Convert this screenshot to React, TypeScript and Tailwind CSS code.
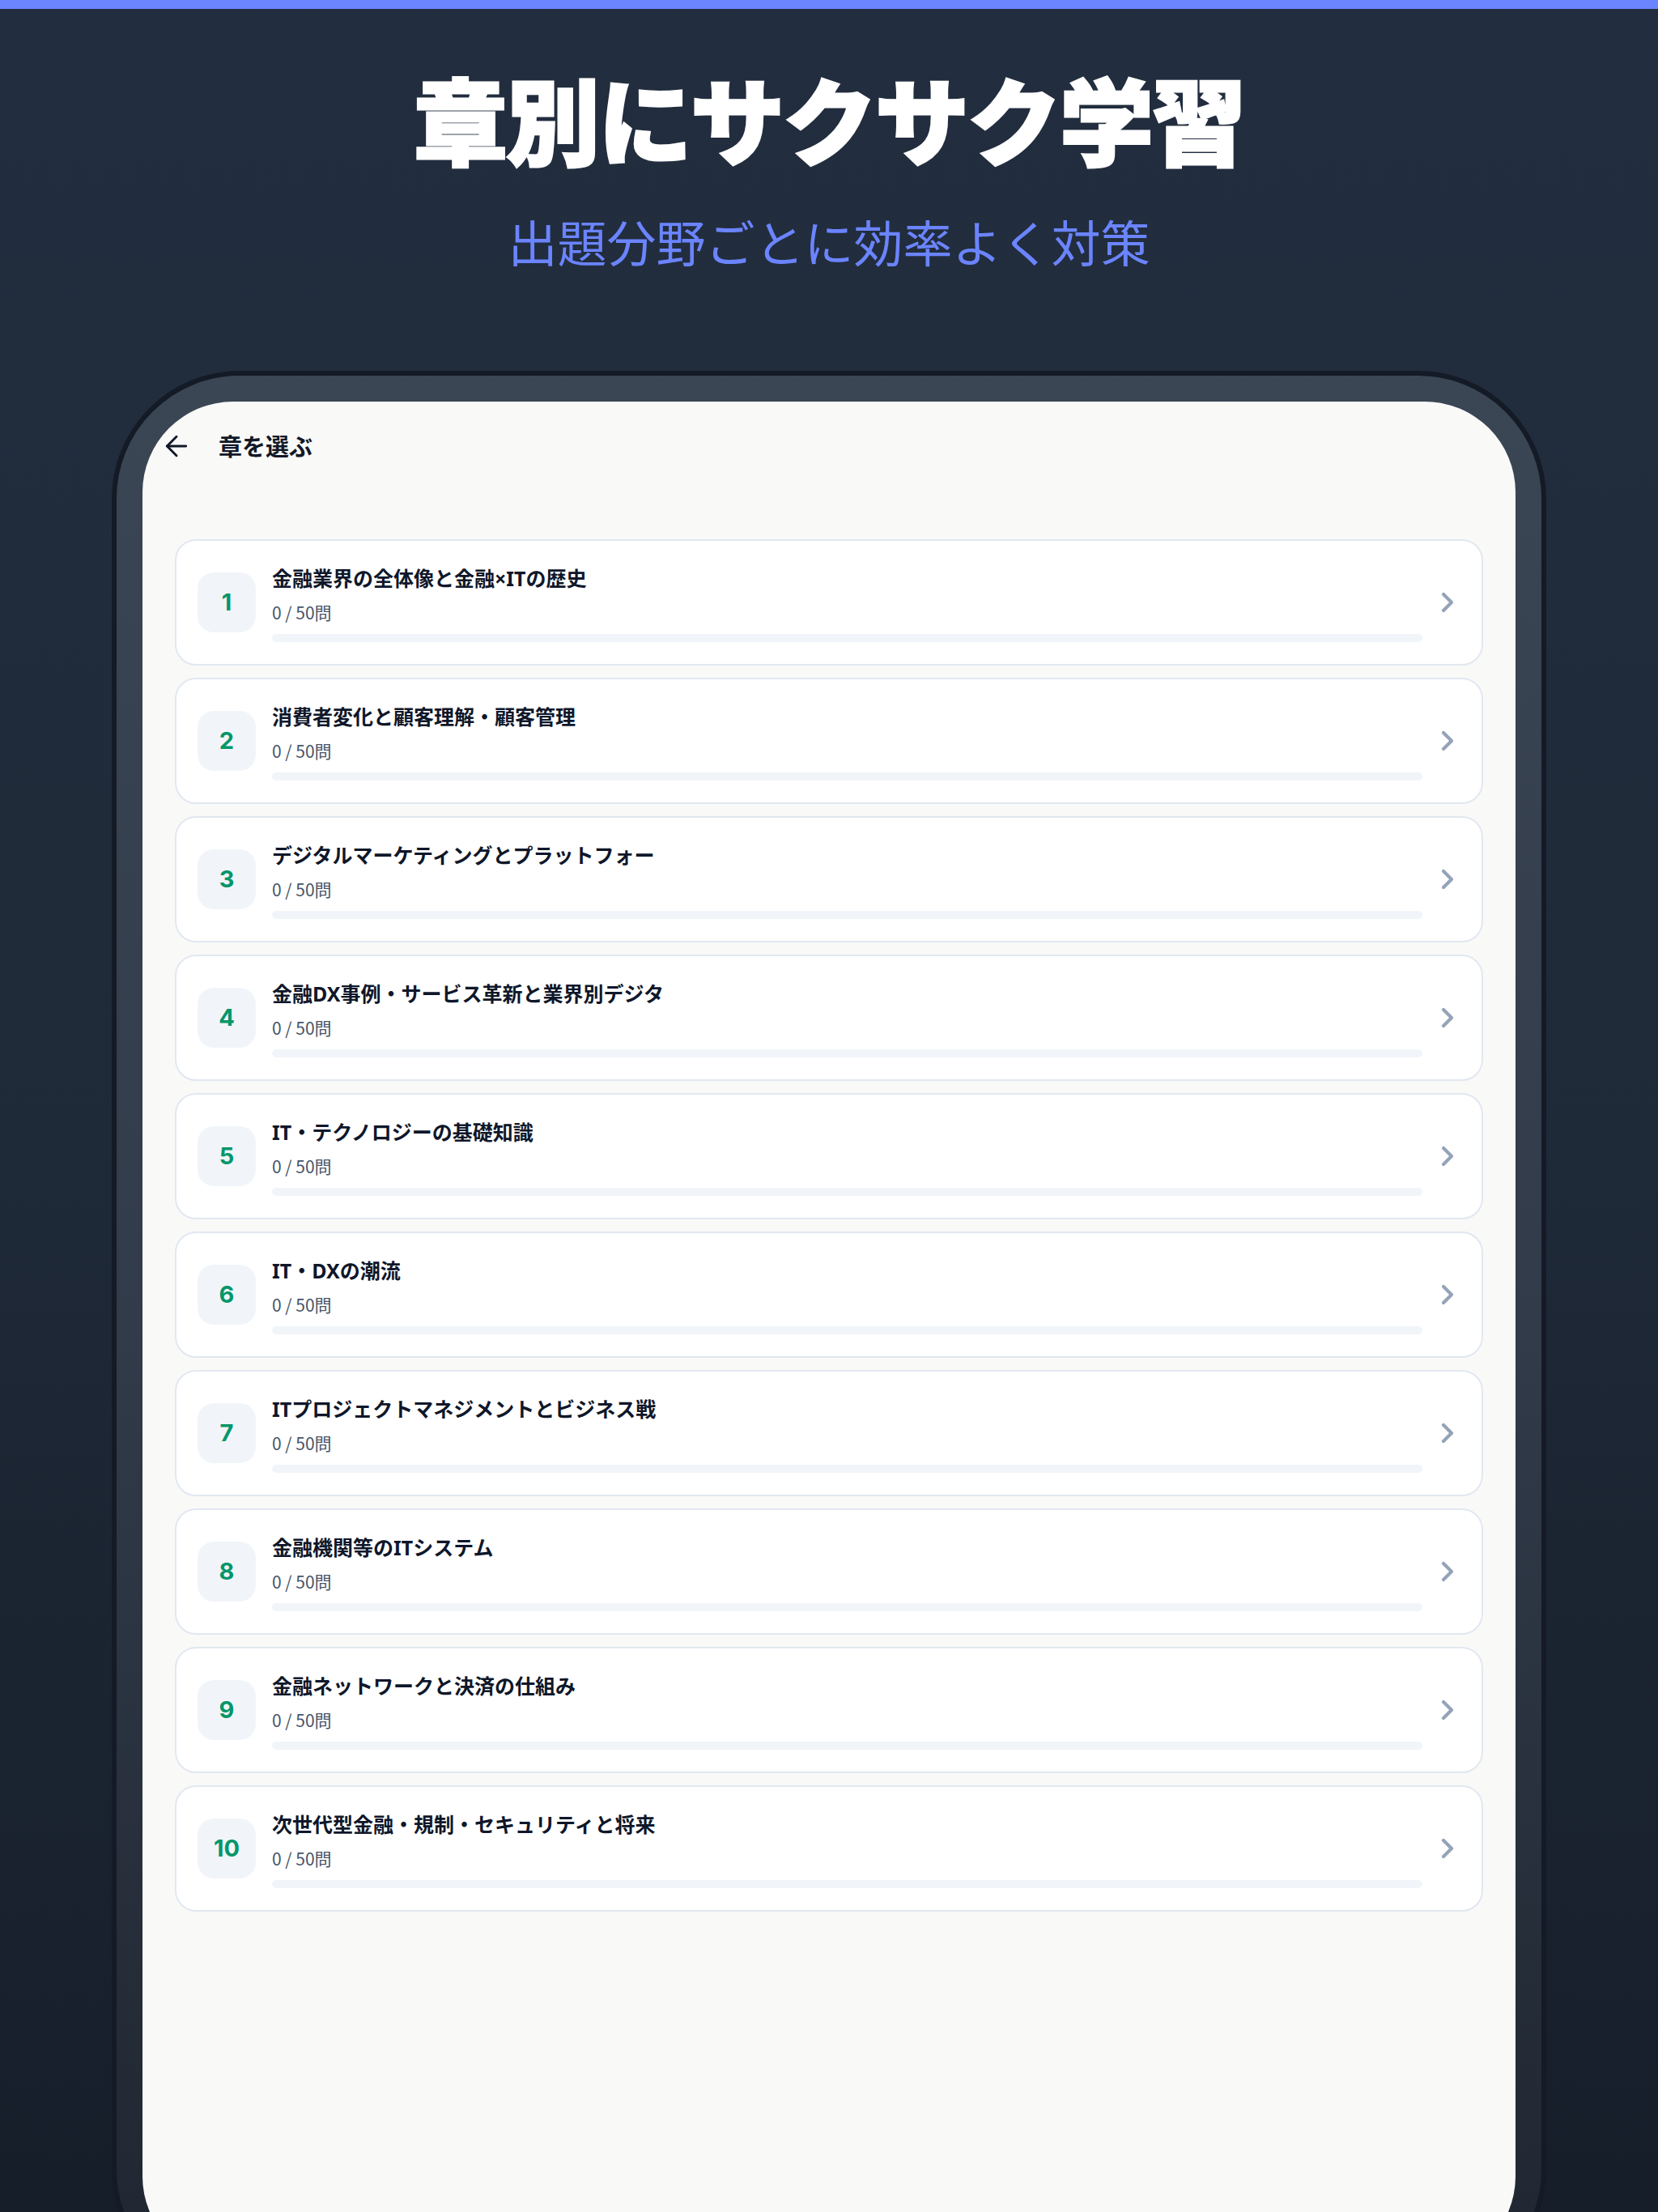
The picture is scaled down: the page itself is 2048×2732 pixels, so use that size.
import { ArrowLeft, ChevronRight } from "lucide-react";

const chapters = [
  "金融業界の全体像と金融×ITの歴史",
  "消費者変化と顧客理解・顧客管理",
  "デジタルマーケティングとプラットフォー",
  "金融DX事例・サービス革新と業界別デジタ",
  "IT・テクノロジーの基礎知識",
  "IT・DXの潮流",
  "ITプロジェクトマネジメントとビジネス戦",
  "金融機関等のITシステム",
  "金融ネットワークと決済の仕組み",
  "次世代型金融・規制・セキュリティと将来",
];

function ChapterCard(props: { index: number; title: string }) {
  return (
    <div className="flex h-[156px] items-center rounded-[26px] border-2 border-[#e2e8f0] bg-white pl-[26px] pr-[22px]">
      <div className="flex h-[74px] w-[72px] shrink-0 items-center justify-center rounded-[20px] bg-[#f1f5f9]">
        <span className="font-['Inter',sans-serif] text-[29px] font-bold text-[#059669]">
          {props.index}
        </span>
      </div>
      <div className="ml-5 flex flex-1 flex-col">
        <div className="font-['Noto_Sans','Noto_Sans_CJK_JP',sans-serif] text-[25px] leading-[36px] font-bold text-[#0f172a]">
          {props.title}
        </div>
        <div className="mt-[9px] text-[21px] leading-[30px] text-[#475569]">
          0 / 50問
        </div>
        <div className="mt-[12px] h-[10px] w-full rounded-full bg-[#f1f5f9]" />
      </div>
      <ChevronRight
        size={40}
        strokeWidth={2.5}
        className="ml-[11px] shrink-0 text-[#94a3b8]"
      />
    </div>
  );
}

export default function App() {
  return (
    <div className="flex h-[2732px] w-full flex-col items-center overflow-hidden bg-gradient-to-b from-[#222e3f] via-[#1f2a38] to-[#161e2a] font-['Noto_Sans_CJK_JP','Noto_Sans',sans-serif]">
      <div className="h-[11px] w-full shrink-0 bg-[#6b84ff]" />
      <h1 className="mt-[63px] text-[116px] leading-[140px] font-black tracking-[-2px] text-white [-webkit-text-stroke:3px_white]">
        章別にサクサク学習
      </h1>
      <p className="mt-[44px] text-[61px] leading-[80px] text-[#6b84ff]">
        出題分野ごとに効率よく対策
      </p>

      <div className="mt-[120px] h-[2380px] w-[1772px] shrink-0 rounded-[158px] border-[6px] border-[#141b26] bg-gradient-to-b from-[#3b4654] via-[#313b49] to-[#1f2631] p-[32px]">
        <div className="flex h-full flex-col rounded-[112px] bg-[#f9f9f8]">
          <div className="mt-[31px] flex h-[48px] items-center pl-[22px]">
            <ArrowLeft size={40} strokeWidth={1.75} className="text-[#111827]" />
            <span className="ml-[32px] text-[29px] font-bold text-[#111827]">
              章を選ぶ
            </span>
          </div>
          <div className="mt-[91px] flex flex-col gap-[15px] px-[40px]">
            {chapters.map((title, i) => (
              <ChapterCard key={i} index={i + 1} title={title} />
            ))}
          </div>
        </div>
      </div>
    </div>
  );
}
